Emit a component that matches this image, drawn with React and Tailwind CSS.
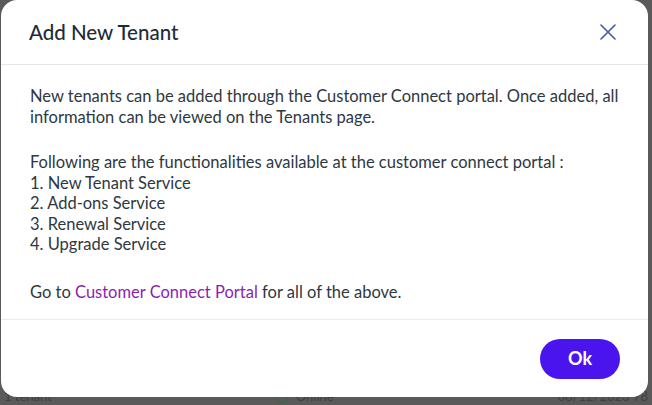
import React from 'react';

const font = { fontFamily: '"Lato", "Noto Sans", sans-serif' };

function CloseIcon() {
  return (
    <svg width="16" height="16" viewBox="0 0 16 16" fill="none" stroke="#3b5aa6" strokeWidth="1.6" strokeLinecap="round">
      <path d="M1 1 L15 15 M15 1 L1 15" />
    </svg>
  );
}

export default function App() {
  const services = ['New Tenant Service', 'Add-ons Service', 'Renewal Service', 'Upgrade Service'];

  return (
    <div className="relative h-[405px] w-full overflow-hidden bg-[#5a5a5a]" style={font}>
      {/* page behind the overlay */}
      <div className="flex h-full flex-col justify-end">
        <div className="flex h-[16px] items-center justify-between px-1 text-[13px] text-[#404040]">
          <span>1 tenant</span>
          <span className="flex items-center gap-2">
            <span className="h-3 w-3 rounded-full border border-[#2f6b3a]"></span>
            Online
          </span>
          <span>08/12/2023 78</span>
        </div>
      </div>

      {/* modal */}
      <div className="absolute left-[1px] top-0 flex h-[397px] w-[647px] flex-col rounded-2xl bg-white">
        <div className="flex h-[65px] items-center justify-between border-b border-[#e6e6e6] pl-[28px] pr-[30px]">
          <h2 className="text-[20.5px] font-medium text-[#1f2c38]">Add New Tenant</h2>
          <button className="flex h-5 w-5 items-center justify-center">
            <CloseIcon />
          </button>
        </div>

        <div className="border-b border-[#ebebeb] px-[29px] pb-[17px] pt-[21px] text-[16.5px] leading-[20.5px] text-[#2e3842]">
          <p>
            New tenants can be added through the Customer Connect portal. Once added, all information can be
            viewed on the Tenants page.
          </p>
          <p className="mt-[25px]">Following are the functionalities available at the customer connect portal :</p>
          <ol>
            {services.map((s, i) => (
              <li key={s}>
                {i + 1}. {s}
              </li>
            ))}
          </ol>
          <p className="mt-[27px]">
            Go to <a className="text-[#8a1fae]">Customer Connect Portal</a> for all of the above.
          </p>
        </div>

        <div className="flex flex-1 items-center justify-end pr-[28px]">
          <button className="h-[40px] w-[80px] rounded-full bg-[#4a14ef] text-[18px] font-bold text-white">
            Ok
          </button>
        </div>
      </div>
    </div>
  );
}
